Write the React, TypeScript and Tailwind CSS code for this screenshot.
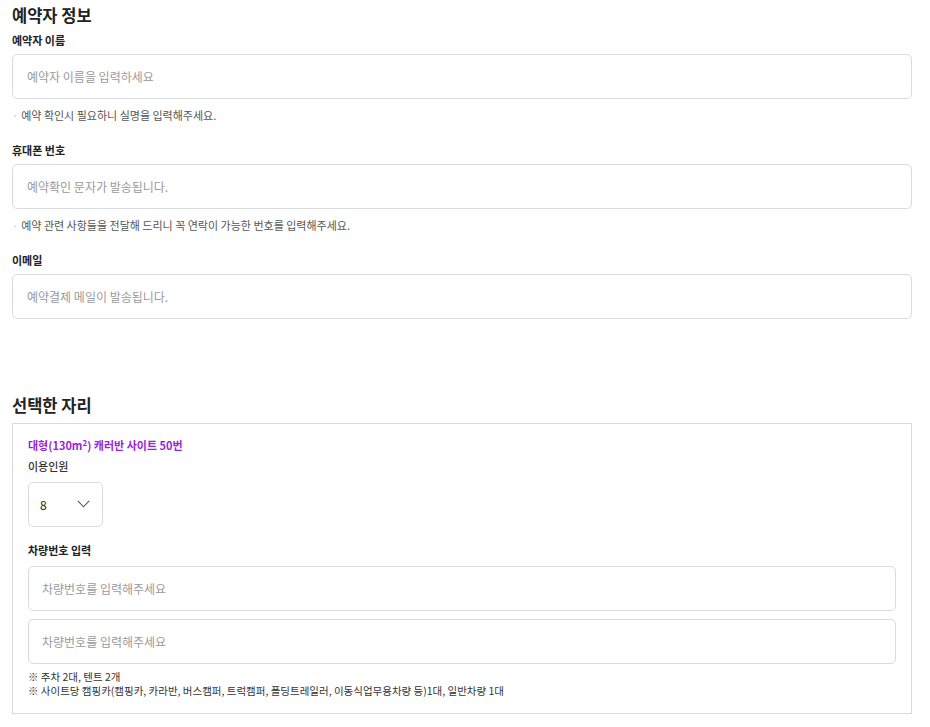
import React, { useState } from 'react';

const FONT = { fontFamily: '"Noto Sans CJK KR", "Noto Sans", sans-serif' };

function Field({ label, placeholder, hint }: { label: string; placeholder: string; hint?: string }) {
  return (
    <div>
      <p className="h-[18px] text-[11px] font-bold leading-[18px] text-[#222]">{label}</p>
      <input
        type="text"
        placeholder={placeholder}
        className="mt-[5px] block h-[45px] w-full rounded-[5px] border border-[#d8dbe0] bg-white px-[14px] text-[12px] text-[#222] placeholder-[#9a9a9a] outline-none"
      />
      {hint && (
        <p className="mt-[7px] h-[18px] text-[11px] leading-[18px] text-[#555]">
          <span className="mr-[3px] text-[#bbb]">·</span>
          {hint}
        </p>
      )}
    </div>
  );
}

export default function App() {
  const [people, setPeople] = useState('8');

  return (
    <div className="min-h-screen bg-white" style={FONT}>
      <div className="ml-[12px] w-[900px]">
        <h2 className="h-[31px] text-[16.5px] font-semibold leading-[31px] text-[#222]">예약자 정보</h2>

        <div className="flex flex-col gap-[17px]">
          <Field label="예약자 이름" placeholder="예약자 이름을 입력하세요" hint="예약 확인시 필요하니 실명을 입력해주세요." />
          <Field label="휴대폰 번호" placeholder="예약확인 문자가 발송됩니다." hint="예약 관련 사항들을 전달해 드리니 꼭 연락이 가능한 번호를 입력해주세요." />
          <Field label="이메일" placeholder="예약결제 메일이 발송됩니다." />
        </div>

        <h2 className="mt-[72px] h-[28px] text-[16.5px] font-semibold leading-[28px] text-[#222]">선택한 자리</h2>

        <div className="mt-[4px] border border-[#d9d9d9] px-[15px] pb-[15px] pt-[12px]">
          <p className="h-[18px] text-[11px] font-bold leading-[18px] text-[#9a1fd8]">
            대형(130m<sup className="text-[8px]">2</sup>) 캐러반 사이트 50번
          </p>
          <p className="mt-[3px] h-[18px] text-[11px] font-medium leading-[18px] text-[#333]">이용인원</p>

          <div className="relative mt-[7px] h-[45px] w-[75px]">
            <select
              value={people}
              onChange={(e) => setPeople(e.target.value)}
              className="h-full w-full appearance-none rounded-[5px] border border-[#d8dbe0] bg-white pl-[11px] text-[12px] text-[#222] outline-none"
            >
              {['1', '2', '3', '4', '5', '6', '7', '8'].map((n) => (
                <option key={n} value={n}>{n}</option>
              ))}
            </select>
            <svg className="pointer-events-none absolute right-[13px] top-[18px]" width="13" height="8" viewBox="0 0 13 8" fill="none">
              <path d="M0.8 0.8 L6.5 6.8 L12.2 0.8" stroke="#555" strokeWidth="1.1" />
            </svg>
          </div>

          <p className="mt-[14px] h-[18px] text-[11px] font-bold leading-[18px] text-[#222]">차량번호 입력</p>
          <div className="mt-[7px] flex flex-col gap-[8px]">
            <input
              type="text"
              placeholder="차량번호를 입력해주세요"
              className="block h-[45px] w-full rounded-[5px] border border-[#d8dbe0] px-[13px] text-[12px] placeholder-[#9a9a9a] outline-none"
            />
            <input
              type="text"
              placeholder="차량번호를 입력해주세요"
              className="block h-[45px] w-full rounded-[5px] border border-[#d8dbe0] px-[13px] text-[12px] placeholder-[#9a9a9a] outline-none"
            />
          </div>

          <div className="mt-[6px] text-[10.5px] leading-[14px] text-[#333]">
            <p className="h-[14px]">※ 주차 2대, 텐트 2개</p>
            <p className="h-[14px]">※ 사이트당 캠핑카(캠핑카, 카라반, 버스캠퍼, 트럭캠퍼, 폴딩트레일러, 이동식업무용차량 등)1대, 일반차량 1대</p>
          </div>
        </div>
      </div>
    </div>
  );
}
